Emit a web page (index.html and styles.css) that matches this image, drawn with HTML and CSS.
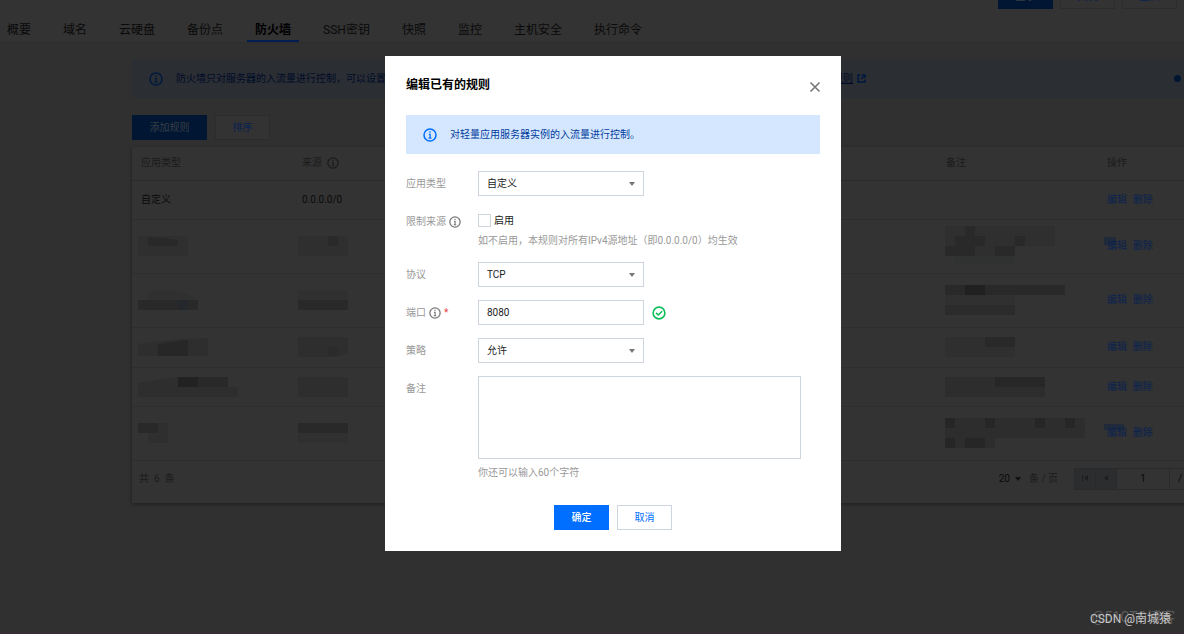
FILE: index.html
```html
<!DOCTYPE html>
<html lang="zh-CN">
<head>
<meta charset="utf-8">
<title>防火墙</title>
<link rel="stylesheet" href="styles.css">
</head>
<body>
<svg class="defs" aria-hidden="true">
  <symbol id="info" viewBox="0 0 14 14"><circle cx="7" cy="7" r="6" fill="none" stroke="currentColor" stroke-width="1.5"/><path d="M7 3.3v1.5M5.8 6.3h1.3v3.9M5.5 10.2h3" fill="none" stroke="currentColor" stroke-width="1.3"/></symbol>
</svg>
<main class="page">
  <header class="top">
    <div class="top-actions">
      <button class="btn dim-primary">登录</button>
      <button class="btn dim-plain">关机</button>
      <button class="btn dim-plain">重启</button>
      <button class="btn dim-plain" aria-label="更多"></button>
    </div>
    <nav class="tabs">
      <a href="#">概要</a><a href="#">域名</a><a href="#">云硬盘</a><a href="#">备份点</a><a href="#" class="active">防火墙</a><a href="#">SSH密钥</a><a href="#">快照</a><a href="#">监控</a><a href="#">主机安全</a><a href="#">执行命令</a>
    </nav>
  </header>
  <section class="content">
    <div class="notice">
      <svg class="icon14"><use href="#info"/></svg>
      <p>防火墙只对服务器的入流量进行控制，可以设置</p>
      <a href="#" class="rule-link"><span>规则</span><svg width="9" height="9" viewBox="0 0 9 9"><path d="M3.5 1H1v7h7V5.5M5 1h3v3M8 1 4 5" fill="none" stroke="currentColor" stroke-width="1.6"/></svg></a>
      <i class="dot"></i>
    </div>
    <div class="toolbar">
      <button class="btn dim-primary wide">添加规则</button>
      <button class="btn dim-plain">排序</button>
    </div>
    <div class="card">
      <table>
        <thead><tr><th>应用类型</th><th><span class="with-icon">来源<svg class="icon12"><use href="#info"/></svg></span></th><th></th><th></th><th></th><th>备注</th><th>操作</th></tr></thead>
        <tbody>
          <tr class="r39"><td>自定义</td><td>0.0.0.0/0</td><td></td><td></td><td></td><td></td><td><a href="#">编辑</a><a href="#">删除</a></td></tr>
          <tr class="r54">
            <td><svg class="mosaic" width="60" height="20"><path fill="#2f2f2f" d="M0 0h50v20H0z"/><path fill="#292929" d="M10 1q15 1 30 3v6H10z"/></svg></td>
            <td><svg class="mosaic" width="50" height="20"><path fill="#2f2f2f" d="M0 0h50v20H0z"/><path fill="#2a2a2a" d="M30 0h10v10H30z"/></svg></td><td></td><td></td><td></td>
            <td><svg class="mosaic" width="120" height="40"><path fill="#2f2f2f" d="M0 0h110v20H70v10H0z"/><path fill="#303131" d="M10 30h60v8H10z"/><path fill="#292929" d="M20 0h10v10H20zM10 10h30v10H10zM70 10h10v10H70zM0 20h30v10H0zM50 20h20v10H50z"/></svg></td>
            <td><a href="#" class="smudge">编辑</a><a href="#">删除</a></td></tr>
          <tr class="r54">
            <td><svg class="mosaic" width="60" height="20"><path fill="#303030" d="M10 1q35-5 50 10H10z"/><path fill="#292929" d="M0 10h60v10H0z"/><path fill="#24272b" d="M40 10h10v10H40z"/></svg></td>
            <td><svg class="mosaic" width="50" height="20"><path fill="#303030" d="M0 0h50v10H0z"/><path fill="#292929" d="M0 10h50v10H0z"/></svg></td><td></td><td></td><td></td>
            <td><svg class="mosaic" width="120" height="30"><path fill="#292929" d="M0 0h120v10H0z"/><path fill="#202020" d="M20 0h20v10H20z"/><path fill="#303030" d="M0 10h70v10H0z"/><path fill="#2b2b2b" d="M0 20h70v10H0z"/></svg></td>
            <td><a href="#">编辑</a><a href="#">删除</a></td></tr>
          <tr class="r40">
            <td><svg class="mosaic" width="70" height="18"><path fill="#2e2e2e" d="M0 6Q30 1 70 0v18H0z"/><path fill="#272727" d="M20 6l30-4v16H20z"/></svg></td>
            <td><svg class="mosaic" width="50" height="20"><path fill="#2e2e2e" d="M0 0h50v16l-10 4H0z"/><path fill="#2b2b2b" d="M30 10h10v9H30z"/></svg></td><td></td><td></td><td></td>
            <td><svg class="mosaic" width="70" height="20"><path fill="#2f2f2f" d="M0 0h70v20H0z"/><path fill="#292929" d="M40 0h30v10H40z"/></svg></td>
            <td><a href="#">编辑</a><a href="#">删除</a></td></tr>
          <tr class="r39">
            <td><svg class="mosaic" width="100" height="20"><path fill="#2e2e2e" d="M0 6 40 0h50v10h10v10H0z"/><path fill="#292929" d="M40 0h50v10H40z"/><path fill="#222" d="M40 0h20v10H40z"/></svg></td>
            <td><svg class="mosaic" width="50" height="20"><path fill="#2e2e2e" d="M0 0h50v20H0z"/></svg></td><td></td><td></td><td></td>
            <td><svg class="mosaic" width="100" height="20"><path fill="#2d2d2d" d="M0 0h100v20H0z"/><path fill="#272727" d="M50 0h50v10H50z"/></svg></td>
            <td><a href="#">编辑</a><a href="#">删除</a></td></tr>
          <tr class="r54">
            <td><svg class="mosaic" width="30" height="20"><path fill="#292929" d="M0 0h20v10H0z"/><path fill="#2f2f2f" d="M20 0h10v20H10V10h10z"/></svg></td>
            <td><svg class="mosaic" width="50" height="20"><path fill="#292929" d="M0 0h50v10H0z"/><path fill="#303030" d="M0 10h50v10H0z"/></svg></td><td></td><td></td><td></td>
            <td><svg class="mosaic" width="140" height="30"><path fill="#2d2d2d" d="M0 0h140v20H50v10H0z"/><path fill="#262626" d="M0 0h10v10H0zM40 0h10v10H40zM90 0h10v10H90zM120 0h10v10h-10zM0 20h10v10H0zM20 20h20v10H20z"/></svg></td>
            <td><a href="#" class="smudge long">编辑</a><a href="#">删除</a></td></tr>
        </tbody>
      </table>
      <footer class="pager">
        <p class="total"><span>共</span><span>6</span><span>条</span></p>
        <button class="size">20 <i class="caret"></i></button><span class="per">条 / 页</span>
        <div class="pages">
          <button aria-label="首页"><svg width="8" height="8" viewBox="0 0 8 8"><path d="M1 1v6h1V1zM7 1v6L3 4z" fill="currentColor"/></svg></button><button aria-label="上一页"><svg width="8" height="8" viewBox="0 0 8 8"><path d="M6 1v6L2 4z" fill="currentColor"/></svg></button><input aria-label="页码" value="1"><span>/</span>
        </div>
      </footer>
    </div>
  </section>
</main>

<div class="overlay">
  <form class="modal" role="dialog" aria-labelledby="title">
    <header class="modal-head">
      <h1 id="title">编辑已有的规则</h1>
      <button type="button" class="close" aria-label="关闭"><svg width="12" height="12" viewBox="0 0 12 12"><path d="m1.5 1.5 9 9m0-9-9 9" stroke="currentColor" stroke-width="1.6"/></svg></button>
    </header>
    <div class="alert"><svg class="icon14"><use href="#info"/></svg><p>对轻量应用服务器实例的入流量进行控制。</p></div>
    <div class="fields">
      <label class="name" for="app">应用类型</label>
      <div class="field select"><select id="app"><option>自定义</option></select></div>
      <label class="name" for="limit">限制来源<svg class="icon12"><use href="#info"/></svg></label>
      <div class="field stack"><label class="check"><input type="checkbox" id="limit">启用</label><p class="hint">如不启用，本规则对所有IPv4源地址（即0.0.0.0/0）均生效</p></div>
      <label class="name" for="proto">协议</label>
      <div class="field select"><select id="proto"><option>TCP</option></select></div>
      <label class="name" for="port">端口<svg class="icon12"><use href="#info"/></svg><span class="req">*</span></label>
      <div class="field port"><input class="text" id="port" value="8080"><svg width="14" height="14" viewBox="0 0 14 14"><circle cx="7" cy="7" r="5.9" fill="none" stroke="#0abf5b" stroke-width="1.6"/><path d="m4 6.8 2.3 2.2 3.8-3.8" fill="none" stroke="#0abf5b" stroke-width="1.6"/></svg></div>
      <label class="name" for="policy">策略</label>
      <div class="field select"><select id="policy"><option>允许</option></select></div>
      <label class="name" for="note">备注</label>
      <div class="field"><textarea id="note"></textarea><p class="hint">你还可以输入60个字符</p></div>
    </div>
    <footer class="modal-foot"><button type="button" class="btn primary">确定</button><button type="button" class="btn plain">取消</button></footer>
  </form>
</div>
<span class="mark back">@51CTO博客</span>
<span class="mark front">CSDN @南城猿</span>
</body>
</html>
```
FILE: styles.css
```css
* { box-sizing: border-box; }
body {
  margin: 0;
  min-height: 100vh;
  overflow: hidden;
  background: #303030;
  color: #0a0a0a;
  font: 10px/16px Roboto, "Noto Sans CJK SC", sans-serif;
}
p, h1 { margin: 0; }
a { color: inherit; text-decoration: none; }
button, input, select, textarea { font: inherit; color: inherit; margin: 0; padding: 0; border-radius: 0; }
svg { flex: none; }
.defs { display: none; }
.icon14 { width: 14px; height: 14px; }
.icon12 { width: 12px; height: 12px; }

.page { min-height: 100vh; overflow: hidden; border-bottom: 2px solid #352d33; }
.top { background: #333; border-bottom: 1px solid #2d2d2d; }
.top-actions {
  display: flex;
  justify-content: flex-end;
  align-items: flex-end;
  gap: 7px;
  height: 9px;
  margin-right: -55px;
  overflow: hidden;
}
.btn { flex: none; width: 55px; height: 25px; border: 1px solid; cursor: pointer; }
.wide { width: 75px; }
.dim-primary { background: #001633; border-color: #001633; color: #3a3f46; }
.dim-plain { background: #333; border-color: #2b2c2e; color: #0a2250; }
.tabs { display: flex; gap: 16px; font-size: 12px; }
.tabs a { padding: 13px 8px 2px; line-height: 16px; border-bottom: 2px solid transparent; }
.tabs a:first-child { padding-left: 7px; }
.tabs .active { font-weight: 700; color: #000; border-color: #001e50; }

.content { margin: 16px -75px 0 132px; }
.notice {
  display: flex;
  align-items: center;
  height: 39px;
  padding: 0 78px 0 17px;
  background: #2b2e33;
  color: #000c28;
}
.notice .icon14, .rule-link svg { color: #00193f; }
.notice p { flex: 0 0 644px; padding-left: 13px; overflow: hidden; white-space: nowrap; }
.rule-link { display: flex; align-items: center; gap: 4px; margin-left: 26px; }
.rule-link span { text-decoration: underline; }
.dot { width: 7px; height: 7px; margin-left: auto; border-radius: 50%; background: #001633; }
.toolbar { display: flex; gap: 8px; padding: 17px 0 7px; }

.card { background: #333; box-shadow: 0 1px 3px #1f1f1f; }
table { width: 100%; border-collapse: collapse; table-layout: fixed; }
th { height: 33px; padding: 0 9px; text-align: left; font-weight: 400; color: #1b1b1b; border-bottom: 1px solid #2a2b2c; }
td { padding: 0 9px; border-bottom: 1px solid #2e2e2e; vertical-align: middle; }
td a { color: #0a2250; margin-right: 6px; }
.with-icon { display: flex; align-items: center; gap: 5px; }
.r39 { height: 39px; }
.r40 { height: 40px; }
.r54 { height: 54px; }
.mosaic { display: block; margin-left: -3px; }
td:nth-child(2) .mosaic { margin-left: -4px; }
td:nth-child(6) .mosaic { margin-left: -1px; }
.smudge { margin-left: -3px; padding: 3px 0 0 3px; background: linear-gradient(#202a3b, #202a3b) 0 0 / 12px 8px no-repeat; }
.long { background-size: 20px 6px; }
.pager { display: flex; align-items: center; height: 42px; padding: 0 0 6px 7px; color: #1b1b1b; }
.total { display: flex; gap: 5px; margin-right: auto; }
.size { display: flex; align-items: center; gap: 5px; border: 0; background: none; color: #0a0a0a; }
.caret { border: 3px solid transparent; border-top: 4px solid #111; border-bottom: 0; }
.per { margin: 0 16px 0 8px; }
.pages { display: flex; width: 185px; height: 22px; border: 1px solid #292a2b; color: #0a0a0a; }
.pages button { width: 21px; border: 0; border-right: 1px solid #292a2b; background: #2c2d2f; color: #1d1e20; }
.pages input { width: 53px; border: 0; border-right: 1px solid #292a2b; background: none; text-align: center; }
.pages span { padding: 2px 8px; }

.overlay { position: absolute; inset: 0; display: flex; justify-content: center; align-items: flex-start; padding: 56px 0 0 42px; }
.modal { width: 456px; padding: 21px; background: #fff; color: #222; }
.modal-head { display: flex; justify-content: space-between; align-items: flex-start; height: 38px; }
.modal-head h1 { font-size: 12px; line-height: 16px; color: #000; }
.close { display: flex; margin: 4px -1px 0 0; border: 0; background: none; color: #777; }
.alert { display: flex; align-items: center; gap: 13px; height: 39px; padding: 0 17px; background: #d5e7ff; color: #003b9c; }
.alert .icon14 { color: #006eff; }
.fields { display: grid; grid-template-columns: 72px 1fr; row-gap: 13px; padding-top: 17px; }
.name { display: flex; align-items: center; gap: 3px; height: 25px; color: #999; }
.name .icon12 { color: #777; }
.req { color: #e54545; }
.field select, .text {
  display: block;
  width: 166px;
  height: 25px;
  padding: 0 8px;
  border: 1px solid #cfd5de;
  background: #fff;
  color: #222;
  appearance: none;
}
.select { position: relative; width: 166px; }
.select::after {
  content: "";
  position: absolute;
  top: 11px;
  right: 9px;
  border: 3px solid transparent;
  border-top: 4px solid #777;
  border-bottom: 0;
  pointer-events: none;
}
.port { display: flex; align-items: center; gap: 8px; }
.stack { padding-top: 3px; }
.check { display: flex; align-items: center; gap: 3px; height: 17px; }
.check input { appearance: none; width: 13px; height: 13px; border: 1px solid #cfd5de; }
.hint { color: #999; white-space: nowrap; }
.stack .hint { padding-top: 4px; }
textarea { display: block; width: 323px; height: 83px; border: 1px solid #cfd5de; resize: none; }
textarea + .hint { padding-top: 6px; }
.modal-foot { display: flex; justify-content: center; gap: 8px; padding-top: 24px; }
.primary { background: #006eff; border-color: #006eff; color: #fff; font-weight: 500; }
.plain { background: #fff; border-color: #cfd5de; color: #006eff; }

.mark { position: absolute; white-space: nowrap; }
.back { right: 9px; bottom: 9px; font-size: 14px; color: #5c5c5c; }
.front { right: 13px; bottom: 7px; font-size: 12px; color: #c8c8c8; }
```
